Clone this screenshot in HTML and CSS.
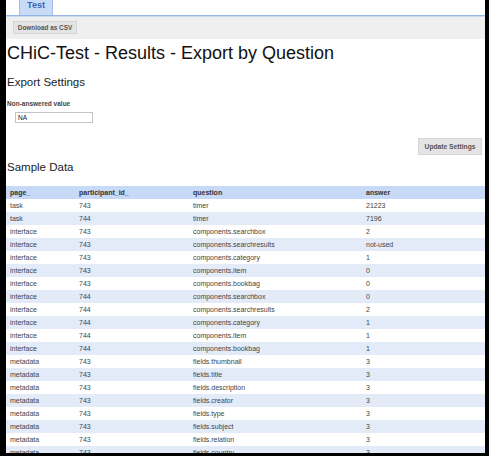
FILE: index.html
```html
<!DOCTYPE html>
<html>
<head>
<meta charset="utf-8">
<link rel="stylesheet" href="styles.css">
</head>
<body>
<div class="screen">
  <div class="page">
    <div class="tabs"><div class="tab">Test</div></div>
    <div class="toolbar"><button class="btn btn-dl">Download as CSV</button></div>
    <div class="content">
      <h1 class="title">CHiC-Test - Results - Export by Question</h1>
      <h2 class="section">Export Settings</h2>
      <div class="label">Non-answered value</div>
      <input class="field" type="text" value="NA">
      <div class="actions"><button class="btn btn-update">Update Settings</button></div>
      <h2 class="section sample">Sample Data</h2>
    </div>
    <table class="data">
      <colgroup><col class="c1"><col class="c2"><col class="c3"><col class="c4"></colgroup>
      <thead><tr><th>page_</th><th>participant_id_</th><th>question</th><th>answer</th></tr></thead>
      <tbody>
        <tr><td>task</td><td>743</td><td>timer</td><td>21223</td></tr>
        <tr><td>task</td><td>744</td><td>timer</td><td>7196</td></tr>
        <tr><td>interface</td><td>743</td><td>components.searchbox</td><td>2</td></tr>
        <tr><td>interface</td><td>743</td><td>components.searchresults</td><td>not-used</td></tr>
        <tr><td>interface</td><td>743</td><td>components.category</td><td>1</td></tr>
        <tr><td>interface</td><td>743</td><td>components.item</td><td>0</td></tr>
        <tr><td>interface</td><td>743</td><td>components.bookbag</td><td>0</td></tr>
        <tr><td>interface</td><td>744</td><td>components.searchbox</td><td>0</td></tr>
        <tr><td>interface</td><td>744</td><td>components.searchresults</td><td>2</td></tr>
        <tr><td>interface</td><td>744</td><td>components.category</td><td>1</td></tr>
        <tr><td>interface</td><td>744</td><td>components.item</td><td>1</td></tr>
        <tr><td>interface</td><td>744</td><td>components.bookbag</td><td>1</td></tr>
        <tr><td>metadata</td><td>743</td><td>fields.thumbnail</td><td>3</td></tr>
        <tr><td>metadata</td><td>743</td><td>fields.title</td><td>3</td></tr>
        <tr><td>metadata</td><td>743</td><td>fields.description</td><td>3</td></tr>
        <tr><td>metadata</td><td>743</td><td>fields.creator</td><td>3</td></tr>
        <tr><td>metadata</td><td>743</td><td>fields.type</td><td>3</td></tr>
        <tr><td>metadata</td><td>743</td><td>fields.subject</td><td>3</td></tr>
        <tr><td>metadata</td><td>743</td><td>fields.relation</td><td>3</td></tr>
        <tr><td>metadata</td><td>743</td><td>fields.country</td><td>3</td></tr>
      </tbody>
    </table>
  </div>
</div>
</body>
</html>
```
FILE: styles.css
```css
html, body {
  margin: 0;
  padding: 0;
}
body {
  background: #000;
}
.screen {
  display: flex;
  height: 456px;
  padding: 0 4px 3px 6px;
  box-sizing: border-box;
  background: #000;
}
.page {
  flex: 1;
  background: #fff;
  overflow: hidden;
  font-family: "Liberation Sans", Arial, sans-serif;
  color: #222;
}
.tabs {
  height: 15px;
  border-bottom: 1px solid #93b4e4;
  box-shadow: 0 1px 0 #c9daf3;
  display: flex;
}
.tab {
  margin-left: 13px;
  width: 34px;
  height: 15px;
  box-sizing: border-box;
  border: 1px solid #9fbde9;
  border-bottom: none;
  border-top: none;
  background: #c7daf6;
  color: #3366bb;
  font-weight: bold;
  font-size: 9px;
  line-height: 11px;
  text-align: center;
}
.toolbar {
  margin-top: 1px;
  height: 22px;
  box-sizing: border-box;
  background: #efefef;
  padding: 4px 0 0 7px;
  display: flex;
  align-items: flex-start;
}
.btn {
  font-family: "Liberation Sans", Arial, sans-serif;
  font-weight: bold;
  color: #555;
  background: #e4e4e4;
  border: 1px solid #d6d6d6;
  border-radius: 0;
  padding: 0;
  margin: 0;
  box-sizing: border-box;
}
.btn-dl {
  width: 64px;
  height: 13px;
  font-size: 6.4px;
  line-height: 11px;
}
.content {
  padding-left: 1px;
}
.title {
  margin: 4px 0 0 0;
  font-size: 18px;
  line-height: 21px;
  font-weight: normal;
  color: #111;
}
.section {
  margin: 12px 0 0 0;
  font-size: 11.5px;
  line-height: 13px;
  font-weight: normal;
  color: #222;
}
.label {
  margin-top: 11px;
  font-size: 6.5px;
  line-height: 8px;
  font-weight: bold;
  color: #444;
}
.field {
  display: block;
  margin: 4px 0 0 8px;
  width: 78px;
  height: 11px;
  box-sizing: border-box;
  border: 1px solid #c4c4c4;
  padding: 0 0 0 2px;
  font-family: "Liberation Sans", Arial, sans-serif;
  font-size: 6.5px;
  color: #222;
  outline: none;
}
.actions {
  display: flex;
  justify-content: flex-end;
  margin: 15px 3px 0 0;
}
.btn-update {
  width: 64px;
  height: 17px;
  font-size: 6.7px;
  line-height: 15px;
}
.sample {
  margin-top: 6px;
}
.data {
  margin-top: 12px;
  width: 100%;
  border-collapse: collapse;
  table-layout: fixed;
  font-size: 7px;
  color: #444;
}
.c1 { width: 69px; }
.c2 { width: 114px; }
.c3 { width: 173px; }
.data th, .data td {
  height: 13px;
  padding: 0 3px 0 4px;
  text-align: left;
  white-space: nowrap;
  overflow: hidden;
  line-height: 13px;
}
.data th {
  background: #c6d9f7;
  font-weight: bold;
  color: #333;
}
.data tbody tr:nth-child(even) td {
  background: #e3ebf9;
}
```
